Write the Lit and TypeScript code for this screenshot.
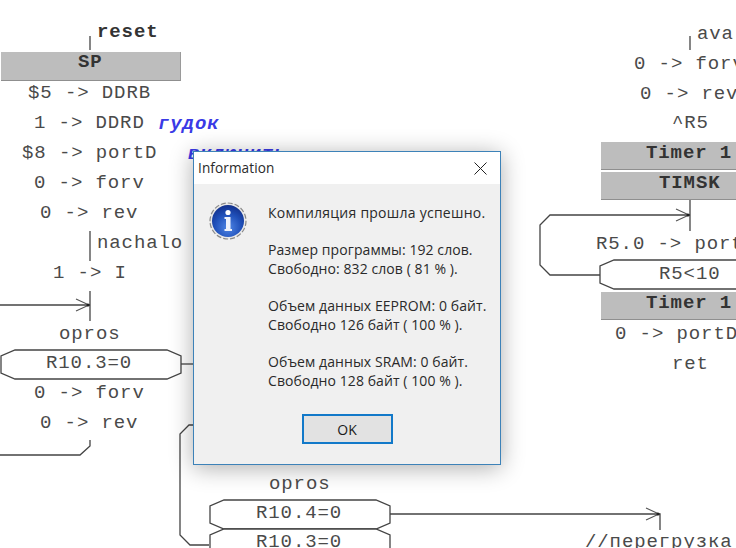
import { LitElement, html, css, svg } from "lit";
import { customElement } from "lit/decorators.js";

type T = [string, number, number, string?];
const LABELS: T[] = [
  ["reset", 97, 32, "b"], ["SP", 78, 62, "b"], ["$5 -> DDRB", 28, 93], ["1 -> DDRD", 34, 123],
  ["гудок", 158, 124, "c"], ["$8 -> portD", 22, 153], ["включить", 188, 154, "c"], ["0 -> forv", 34, 183],
  ["0 -> rev", 40, 213], ["nachalo", 97, 243], ["1 -> I", 53, 273], ["opros", 59, 334],
  ["R10.3=0", 46, 363], ["0 -> forv", 34, 393], ["0 -> rev", 40, 423], ["opros", 269, 484],
  ["R10.4=0", 256, 513], ["R10.3=0", 256, 542], ["//перегрузка", 585, 542], ["ava", 697, 34],
  ["0 -> forv", 634, 64], ["0 -> rev", 640, 94], ["^R5", 672, 123], ["Timer 1", 646, 153, "b"],
  ["TIMSK", 659, 183, "b"], ["R5.0 -> port", 596, 244], ["R5<10", 659, 274], ["Timer 1", 646, 303, "b"],
  ["0 -> portD", 615, 334], ["ret", 672, 364],
];
const BOXES = [[1, 52, 180, 29], [601, 142, 140, 28], [601, 172, 140, 28], [601, 292, 140, 28]];
const LINES = [
  "M90 36V50", "M90 231V261", "M0 305H90", "M90 291V321", "M90 440V446L80 455H0", "M181 364H195",
  "M195 425H189L180 434V535L190 545H209", "M390 514H660V530", "M690 36V50", "M690 200V231",
  "M600 275H550L540 265V225L550 215H690",
];
const ARROWS = [[89, 305], [659, 514], [689, 215]];
const oct = (x: number, y: number, w: number, h: number) =>
  `M${x + 14} ${y}H${x + w - 14}L${x + w} ${y + 6}V${y + h - 6}L${x + w - 14} ${y + h}H${x + 14}L${x} ${y + h - 6}V${y + 6}Z`;

@customElement("app-root")
export class AppRoot extends LitElement {
  static styles = css`
    :host { display: block; position: relative; width: 736px; height: 548px; overflow: hidden; background: #fff; }
    .wires { position: absolute; inset: 0; }
    .wire { fill: none; stroke: #444; stroke-width: 1.3; }
    .oct { fill: #fff; stroke: #444; stroke-width: 1.3; }
    .head { fill: none; stroke: #555; stroke-width: 1.1; }
    .box { position: absolute; background: #bdbdbd; border-bottom: 1px solid #8f8f8f; border-right: 1px solid #9a9a9a; box-sizing: border-box; }
    .lbl { position: absolute; font: 19px/20px "Liberation Mono", monospace; letter-spacing: .9px; color: #4a4a4a; white-space: pre; }
    .lbl.b { font-weight: 700; color: #333; }
    .lbl.c { font-weight: 700; font-style: italic; color: #3a3ae6; }
    .dialog { position: absolute; left: 193px; top: 151px; width: 308px; height: 314px; box-sizing: border-box; display: flex; flex-direction: column;
      border: 1px solid #3d82b8; background: #f0f0f0; box-shadow: 0 3px 22px rgba(0,0,0,.32); font: 14px/18.67px "Open Sans", sans-serif; color: #2a2a2a; }
    .title { height: 32px; flex: none; background: #fff; display: flex; align-items: center; justify-content: space-between; padding: 0 13px 0 4px; font-size: 13.6px; letter-spacing: .1px; }
    .body { flex: 1; display: flex; padding: 21px 0 0 15px; gap: 21px; }
    .icon { flex: none; margin-top: -3px; }
    .msg { letter-spacing: .08px; margin-top: -1px; }
    .msg p { margin: 0 0 18.67px; white-space: pre; }
    .msg p.lead { letter-spacing: .25px; }
    .foot { height: 50px; flex: none; display: flex; justify-content: center; }
    .ok { width: 91px; height: 30px; box-sizing: border-box; border: 2.5px solid #1279c9; background: #e2e2e2; font: 14px "Open Sans", sans-serif; color: #1b1b1b; padding: 0; }
  `;

  render() {
    return html`
      ${BOXES.map(([x, y, w, h]) => html`<div class="box" style="left:${x}px;top:${y}px;width:${w}px;height:${h}px"></div>`)}
      <svg class="wires" width="736" height="548" viewBox="0 0 736 548">
        ${LINES.map((d) => svg`<path class="wire" d=${d} />`)}
        <path class="oct" d=${oct(1, 350, 180, 29)} />
        <path class="oct" d=${oct(600, 260, 160, 29)} />
        <path class="oct" d=${oct(210, 500, 180, 29)} />
        <path class="oct" d=${oct(210, 529, 180, 29)} />
        ${ARROWS.map(([x, y]) => svg`<path class="head" d="M${x - 13} ${y - 6}L${x} ${y}L${x - 13} ${y + 6}" /><circle cx=${x - 1} cy=${y} r="1.6" fill="#222" />`)}
      </svg>
      ${LABELS.map(([t, x, y, k]) => html`<div class="lbl ${k ?? ""}" style="left:${x}px;top:${y - 10}px">${t}</div>`)}
      <div class="dialog">
        <div class="title">
          <span>Information</span>
          <svg width="13" height="13" viewBox="0 0 13 13"><path d="M.5.5L12.5 12.5M12.5.5L.5 12.5" stroke="#222" stroke-width="1" fill="none" /></svg>
        </div>
        <div class="body">
          <svg class="icon" width="38" height="38" viewBox="0 0 38 38">
            <defs>
              <radialGradient id="g" cx=".5" cy=".7" r=".7"><stop offset="0" stop-color="#4f86e6" /><stop offset=".6" stop-color="#1f4fb8" /><stop offset="1" stop-color="#12308c" /></radialGradient>
            </defs>
            <circle cx="19" cy="19" r="18" fill="#e8e8e8" stroke="#8a8a8a" stroke-width="1.2" stroke-dasharray="5 2" />
            <circle cx="19" cy="19" r="16" fill="url(#g)" />
            <circle cx="19" cy="10.5" r="2.6" fill="#fff" />
            <path d="M15.5 15H21.5V27H23V29H15.5V27H17V17H15.5Z" fill="#eef2fb" />
          </svg>
          <div class="msg">
            <p class="lead">Компиляция прошла успешно.</p>
            <p>Размер программы: 192 слов.
Свободно: 832 слов ( 81 % ).</p>
            <p>Объем данных EEPROM: 0 байт.
Свободно 126 байт ( 100 % ).</p>
            <p>Объем данных SRAM: 0 байт.
Свободно 128 байт ( 100 % ).</p>
          </div>
        </div>
        <div class="foot"><button class="ok">OK</button></div>
      </div>
    `;
  }
}
